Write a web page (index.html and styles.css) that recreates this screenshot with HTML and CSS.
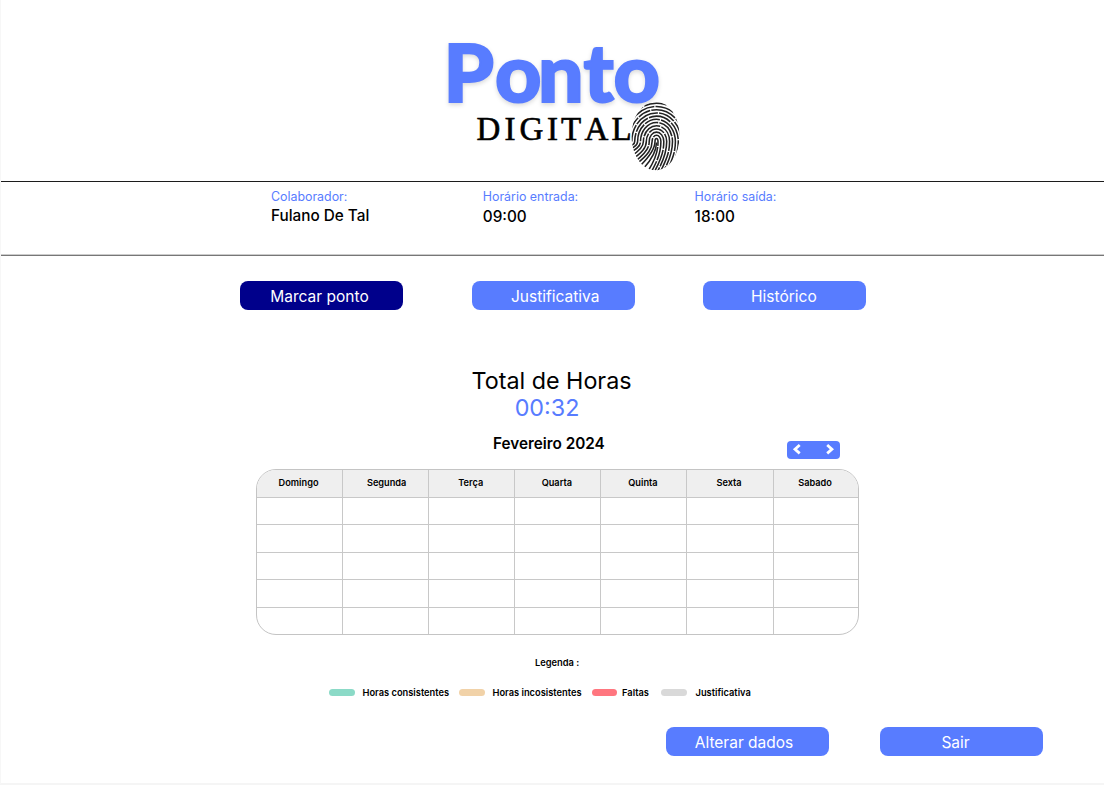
FILE: index.html
```html
<!DOCTYPE html>
<html lang="pt-BR">
<head>
<meta charset="utf-8">
<title>Ponto Digital</title>
<link rel="stylesheet" href="styles.css">
</head>
<body>
<div class="page">
  <header class="header">
    <svg class="logo" width="270" height="150" viewBox="430 30 270 150" role="img" aria-label="Ponto Digital">
      <text class="logo-main" y="101.5" x="443.5 495 538 583.5 613.5">Ponto</text>
      <text class="logo-sub" y="139.500" x="476.5 504.5 519.5 547 561 584.5 611.5">DIGITAL</text>
      <clipPath id="finger"><ellipse cx="24" cy="34.5" rx="24" ry="34.5"/></clipPath>
      <g transform="translate(631.5 101.5)" clip-path="url(#finger)" class="ridges">
        <path stroke-dasharray="40 1.2" d="M9 64C19 54 23.500 47 23.500 40A1.500 3 0 0 1 26.500 40C26.500 52 23 60 15 72"/>
        <path stroke-dasharray="31 1.200" d="M5.500 62C17 53 20.600 47 20.600 40A4.400 6.200 0 0 1 29.400 40C29.400 52 25.400 60 19 72"/>
        <path stroke-dasharray="22 1.200 37 1.200" d="M2.500 61C14 52 17.700 47 17.700 40A7.300 9.400 0 0 1 32.300 40C32.300 52 28.300 60 22 72"/>
        <path stroke-dasharray="34 1.200 17 1.200" d="M-1 59C11 51 14.800 46 14.800 40A10.200 12.600 0 0 1 35.200 40C35.200 52 31.200 60 25 72"/>
        <path stroke-dasharray="27 1.200 21 1.200" d="M-3 56C8 50 11.900 45 11.900 40A13.100 15.800 0 0 1 38.100 40C38.100 52 34.100 60 28 72"/>
        <path stroke-dasharray="19 1.200 29 1.200" d="M-5 53C5 48 9 45 9 40A16 19 0 0 1 41 40C41 52 37 60 31 72"/>
        <path stroke-dasharray="37 1.200 16 1.200" d="M-8 51C2 46 6.100 44 6.100 40A18.900 22.200 0 0 1 43.900 40C43.900 52 40 60 34 72"/>
        <path stroke-dasharray="23 1.200 18 1.200" d="M-8 48C0 44 3.200 43 3.200 40A21.800 25.400 0 0 1 46.800 40C46.800 52 43 60 37 72"/>
        <path stroke-dasharray="17 1.200 25 1.200" d="M.3 40A24.700 28.600 0 0 1 49.700 40"/>
        <path stroke-dasharray="26 1.200 13 1.200" d="M-2.600 40A27.600 31.800 0 0 1 52.600 40"/>
        <path stroke-dasharray="20 1.200 28 1.200" d="M-5.500 40A30.500 35 0 0 1 55.500 40"/>
        <path stroke-dasharray="29 1.200 12 1.200" d="M-8.400 40A33.400 38.200 0 0 1 58.400 40"/>
        <path d="M25 41C25 49 21 57 12 67"/>
      </g>
    </svg>
  </header>

  <section class="info">
    <div class="field"><span class="label">Colaborador:</span><span class="value">Fulano De Tal</span></div>
    <div class="field"><span class="label">Horário entrada:</span><span class="value value-time">09:00</span></div>
    <div class="field"><span class="label">Horário saída:</span><span class="value value-time">18:00</span></div>
  </section>

  <nav class="actions">
    <button class="btn btn-active">Marcar ponto</button>
    <button class="btn btn-reason">Justificativa</button>
    <button class="btn btn-history">Histórico</button>
  </nav>

  <main>
    <h1 class="total">Total de Horas</h1>
    <div class="time">00:32</div>
    <div class="month-row">
      <h2 class="month">Fevereiro 2024</h2>
      <div class="pager">
        <svg width="53" height="18" viewBox="0 0 53 18"><path d="M12.700 4L8 8.200L12.700 12.400M40.200 4L44.900 8.200L40.200 12.400"/></svg>
      </div>
    </div>
    <div class="calendar">
      <div class="th">Domingo</div><div class="th th-mon">Segunda</div><div class="th">Terça</div><div class="th">Quarta</div><div class="th">Quinta</div><div class="th">Sexta</div><div class="th">Sabado</div>
      <div></div><div></div><div></div><div></div><div></div><div></div><div></div>
      <div></div><div></div><div></div><div></div><div></div><div></div><div></div>
      <div></div><div></div><div></div><div></div><div></div><div></div><div></div>
      <div></div><div></div><div></div><div></div><div></div><div></div><div></div>
      <div></div><div></div><div></div><div></div><div></div><div></div><div></div>
    </div>
    <div class="legend-title">Legenda :</div>
    <div class="legend">
      <i class="chip ok"></i><span class="l-ok">Horas consistentes</span>
      <i class="chip warn"></i><span class="l-warn">Horas incosistentes</span>
      <i class="chip miss"></i><span class="l-miss">Faltas</span>
      <i class="chip just"></i><span class="l-just">Justificativa</span>
    </div>
  </main>

  <footer class="footer">
    <button class="btn btn-edit">Alterar dados</button>
    <button class="btn btn-exit">Sair</button>
  </footer>
</div>
</body>
</html>
```
FILE: styles.css
```css
* { box-sizing: border-box; }
body { margin: 0; background: #fff; font-family: Inter, "Liberation Sans", sans-serif; color: #000; }
.page { width: 1104px; height: 785px; overflow: hidden; border-left: 1px solid #f7f7f7; border-bottom: 2px solid #f5f5f5; }
.header { height: 182px; border-bottom: 1px solid #1c1c1c; padding: 30px 0 0 429px; }
.logo { display: block; overflow: visible; }
.logo-main { font: 900 80.5px Lato, sans-serif; fill: #587cff; stroke: #587cff; stroke-width: 2; filter: drop-shadow(0 2px 2px rgba(0,0,0,.15)); }
.logo-sub { font: 33px "Liberation Serif", serif; fill: #000; stroke: #000; stroke-width: .6; }
.ridges { fill: none; stroke: #222; stroke-width: 1.55; }
.info { height: 74px; border-bottom: 1px solid #777; box-shadow: inset 0 -1px #ccc; padding: 7px 0 0 270px; display: flex; }
.field { width: 211.8px; display: flex; flex-direction: column; }
.label { color: #587cff; font-size: 12.4px; line-height: 16px; }
.value { font-size: 15.3px; line-height: 22px; font-weight: 450; }
.value-time { line-height: 24px; }
.actions { display: flex; gap: 68.7px; padding: 25px 0 0 239px; }
.btn { width: 163px; height: 29px; flex: none; border: 0; border-radius: 8px; padding: 2px 0 0; background: #587cff; color: #fff; font: 15.5px/27px Inter, sans-serif; text-align: center; }
.btn-active { background: #00008b; padding-right: 4px; }
.btn-reason { padding-left: 4px; }
.btn-history { padding-right: 2px; }
.total { margin: 57px 0 0; width: 1101px; text-align: center; font-weight: 400; font-size: 23.3px; line-height: 28px; }
.time { width: 1092px; text-align: center; color: #587cff; font-size: 23.3px; line-height: 25px; }
.month-row { display: flex; padding: 14px 0 0 492px; height: 49px; }
.month { width: 294px; margin: 0; font-weight: 600; font-size: 15.3px; line-height: 20px; }
.pager { width: 53px; height: 18px; margin-top: 7px; border-radius: 4px; background: #587cff; }
.pager svg { display: block; fill: none; stroke: #fff; stroke-width: 2.8; }
.calendar { width: 603px; height: 166px; margin-left: 255px; border: 1px solid #c4c4c4; border-radius: 20px; overflow: hidden; display: grid; grid-template-columns: repeat(7, 86.1px); grid-template-rows: repeat(6, 27.6px); }
.calendar div { border-right: 1px solid #c8c8c8; border-bottom: 1px solid #c8c8c8; }
.calendar .th { background: #efefef; font-size: 9.2px; line-height: 26px; font-weight: 600; text-align: center; padding-right: 2px; }
.calendar .th-mon { padding: 0 0 0 2px; }
.legend-title { margin: 21px 0 0 534px; font-size: 9.3px; line-height: 13px; font-weight: 600; }
.legend { display: flex; align-items: center; margin: 17px 0 0 328px; height: 12px; font-size: 9.3px; font-weight: 600; white-space: nowrap; }
.legend span { margin-left: 8px; }
.chip { width: 25.5px; height: 7px; border-radius: 4px; flex: none; }
.ok { background: #8bdac7; }
.warn { background: #f1d2a8; }
.miss { background: #ff767f; }
.just { background: #d9d9d9; }
.warn, .miss { margin-top: 1px; }
.legend .l-ok { width: 96.5px; }
.legend .l-warn { width: 99px; }
.legend .l-miss { width: 39px; margin-left: 5px; }
.legend .l-just { margin-left: 9px; }
.footer { display: flex; gap: 51px; padding: 29px 0 0 665px; }
.btn-edit { padding-right: 7px; }
.btn-exit { padding-right: 12px; }
```
